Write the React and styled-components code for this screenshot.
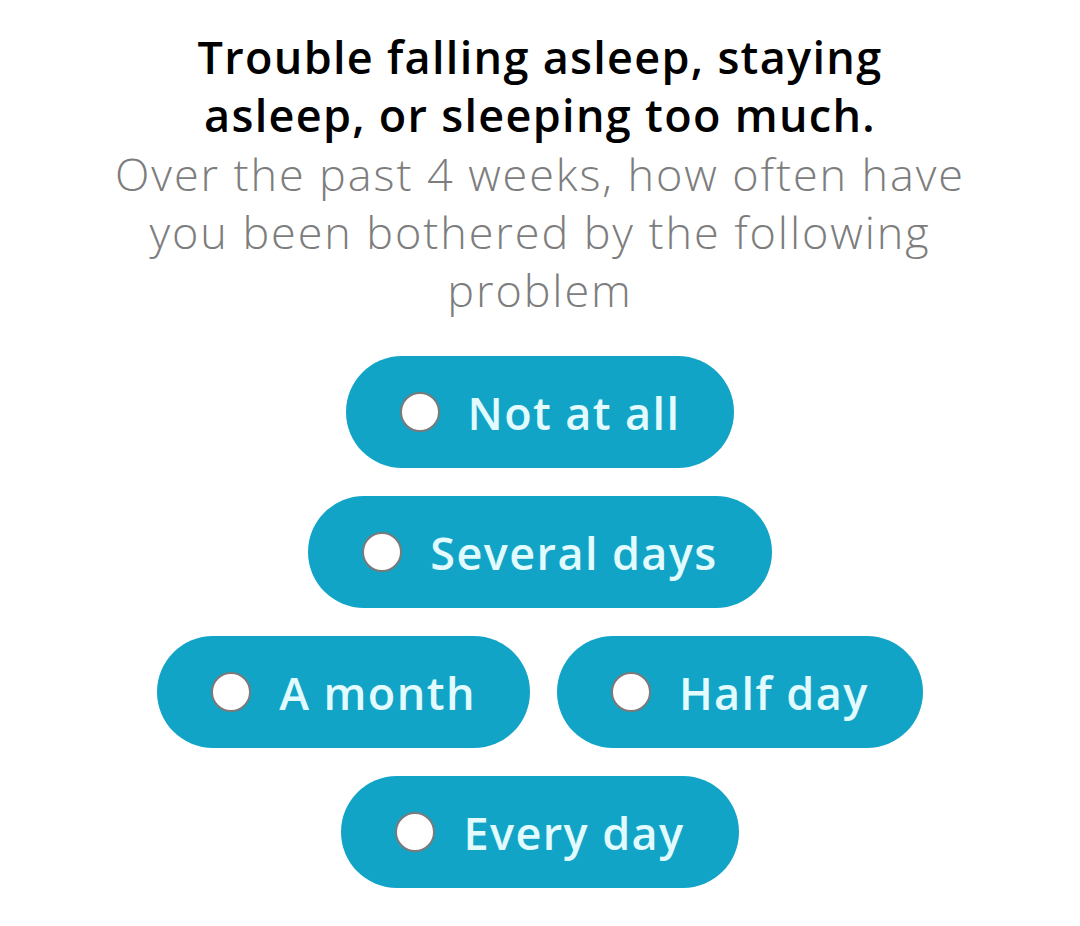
import React, { useState } from 'react';
import styled, { createGlobalStyle } from 'styled-components';

const GlobalStyle = createGlobalStyle`
  html, body {
    margin: 0;
    padding: 0;
    background: #ffffff;
  }
  body {
    font-family: "Open Sans", "Noto Sans", sans-serif;
  }
`;

// answers laid out row by row, as on the original screen
const rows = [
  ['Not at all'],
  ['Several days'],
  ['A month', 'Half day'],
  ['Every day'],
];

const App = () => {
  const [selected, setSelected] = useState(null);

  return (
    <Page>
      <GlobalStyle />
      <Header>
        <Title>Trouble falling asleep, staying asleep, or sleeping too much.</Title>
        <Subtitle>
          Over the past 4 weeks, how often have you been bothered by the following problem
        </Subtitle>
      </Header>
      <Options>
        {rows.map((row, i) => (
          <OptionRow key={i}>
            {row.map((label) => (
              <OptionButton key={label} onClick={() => setSelected(label)}>
                <Radio $checked={selected === label} />
                {label}
              </OptionButton>
            ))}
          </OptionRow>
        ))}
      </Options>
    </Page>
  );
};

export default App;

const Page = styled.div`
  width: 1080px;
  min-height: 926px;
  display: flex;
  flex-direction: column;
  align-items: center;
  padding-top: 28px;
  box-sizing: border-box;
`;

const Header = styled.div`
  display: flex;
  flex-direction: column;
  align-items: center;
  text-align: center;
`;

const Title = styled.h1`
  margin: 0;
  max-width: 760px;
  font-size: 45px;
  line-height: 58px;
  font-weight: 600;
  letter-spacing: 1.3px;
  color: #000000;
`;

const Subtitle = styled.p`
  margin: 1px 0 0;
  max-width: 900px;
  font-size: 45px;
  line-height: 58px;
  font-weight: 300;
  letter-spacing: 1.9px;
  color: #7d7d7d;
`;

const Options = styled.div`
  margin-top: 37px;
  display: flex;
  flex-direction: column;
  align-items: center;
  gap: 28px;
`;

const OptionRow = styled.div`
  display: flex;
  justify-content: center;
  gap: 27px;
`;

const OptionButton = styled.button`
  height: 112px;
  padding: 0 54px;
  display: flex;
  align-items: center;
  gap: 28px;
  border: none;
  border-radius: 56px;
  background: #12a4c6;
  color: #e2fbff;
  font-family: "Open Sans", "Noto Sans", sans-serif;
  font-size: 45px;
  font-weight: 600;
  letter-spacing: 1.4px;
  cursor: pointer;
`;

const Radio = styled.span`
  width: 40px;
  height: 40px;
  box-sizing: border-box;
  border-radius: 50%;
  border: 2px solid #7a7a7a;
  background: ${(p) => (p.$checked ? '#0b6f88' : '#ffffff')};
  flex-shrink: 0;
`;
